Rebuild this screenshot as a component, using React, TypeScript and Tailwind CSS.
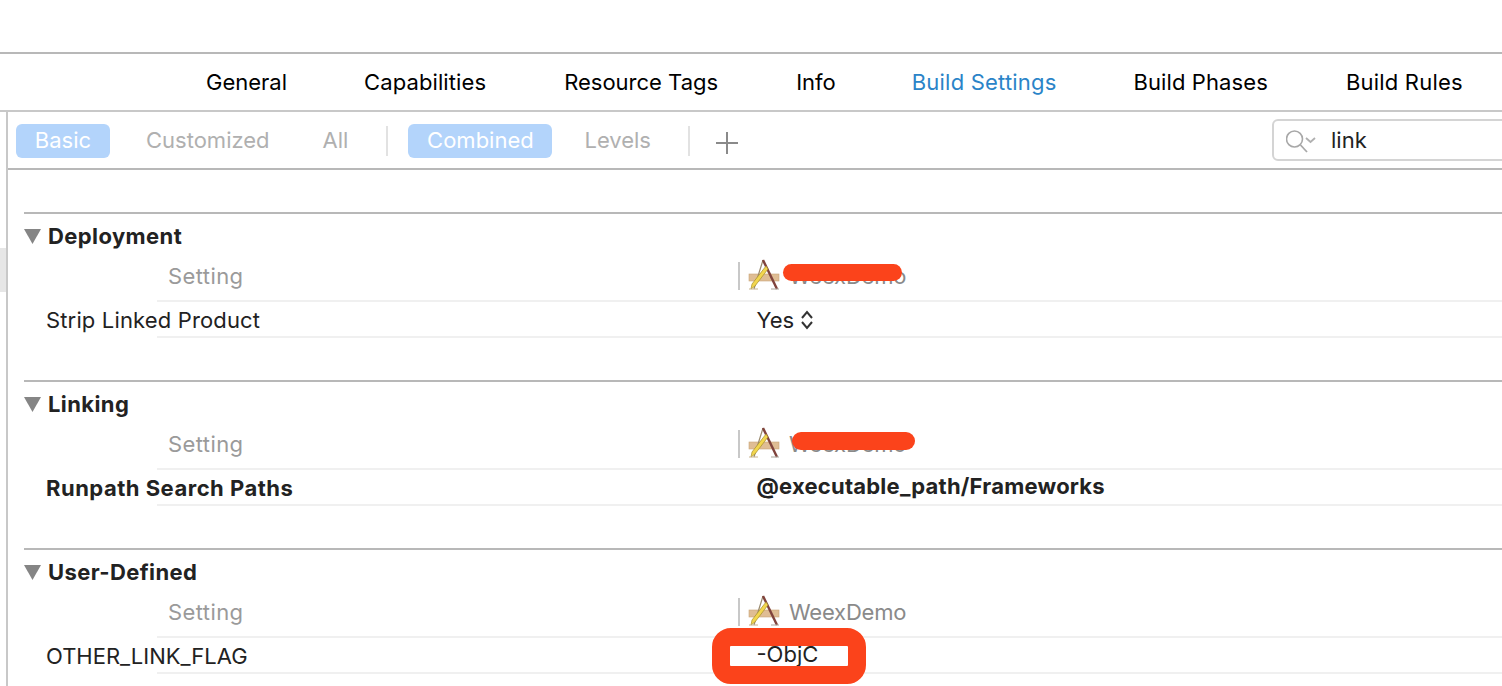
const XcodeIcon = () => (
  <svg width="34" height="32" viewBox="0 0 34 32" className="shrink-0">
    <rect x="1" y="15" width="30" height="7" fill="#dfbd94" stroke="#c9a678" strokeWidth="0.6" />
    <path d="M15 1 L6 30" stroke="#9a8a6e" strokeWidth="1.2" fill="none" />
    <path d="M15 1 L29 30" stroke="#80433c" strokeWidth="2.4" fill="none" />
    <path d="M18 7 L20 10 L7 27 L3 30 L4 25 Z" fill="#f2d64e" stroke="#a88f2c" strokeWidth="0.7" />
    <path d="M1 30 H10" stroke="#c9b48f" strokeWidth="1" />
    <path d="M23 30 H31" stroke="#a9a39a" strokeWidth="1" />
  </svg>
);

const Chevrons = () => (
  <svg width="14" height="20" viewBox="0 0 14 20" className="ml-[6px]">
    <path d="M2 8 L7 2 L12 8 M2 12 L7 18 L12 12" fill="none" stroke="#333" strokeWidth="2" />
  </svg>
);

function Section({ title, project, label, value, bold, chevron, labelTrack, valueClass, children }: {
  title: string; project: string; label: string; value: string; bold?: boolean; chevron?: boolean; labelTrack?: string; valueClass?: string; children?: React.ReactNode;
}) {
  const tone = bold ? "font-bold text-[#222]" : "text-[#222]";
  return (
    <section className="relative ml-[16px] border-t-2 border-[#b8b8b8] mb-[42px]">
      <div className="h-[44px] flex items-center">
        <svg width="17" height="15" viewBox="0 0 17 15" className="shrink-0">
          <path d="M0 0 H17 L8.5 15 Z" fill="#858585" />
        </svg>
        <span className="ml-[7px] text-[22px] font-bold text-[#222] tracking-[0.4px]">{title}</span>
      </div>
      <div className="flex h-[44px] pb-[6px] items-center border-b-2 border-[#f0f0f0] ml-[133px]">
        <span className="text-[22px] text-[#9a9a9a] ml-[11px] w-[570px] tracking-[0.4px]">Setting</span>
        <span className="w-[2px] h-[28px] bg-[#c8c8c8]" />
        <span className="ml-[8px] -mt-[3px] flex"><XcodeIcon /></span>
        <span className="ml-[7px] text-[22px] text-[#8a8a8a] tracking-[-0.2px]">{project}</span>
      </div>
      <div className="flex h-[36px] pt-[2px] items-center border-b-2 border-[#f0f0f0] ml-[133px]">
        <span className={"-ml-[111px] w-[710.5px] shrink-0 text-[22px] " + tone + " " + (labelTrack ?? "")}>{label}</span>
        <span className={"text-[22px] " + tone + " " + (valueClass ?? "")}>{value}</span>
        {chevron && <Chevrons />}
      </div>
      {children}
    </section>
  );
}

const tabs = [
  { t: "General", c: "text-black" },
  { t: "Capabilities", c: "text-black tracking-[0.1px] -ml-[1px]" },
  { t: "Resource Tags", c: "text-black" },
  { t: "Info", c: "text-black" },
  { t: "Build Settings", c: "text-[#2a84c8] tracking-[0.2px] -ml-[2px]" },
  { t: "Build Phases", c: "text-black tracking-[0.1px] -ml-[1px]" },
  { t: "Build Rules", c: "text-black tracking-[0.2px]" },
];

export default function App() {
  return (
    <div className="relative h-[686px] w-[1502px] overflow-hidden bg-white font-['Inter','Liberation_Sans',sans-serif]">
      <div className="h-[52px]" />
      <nav className="h-[60px] border-t-2 border-b-2 border-t-[#b8b8b8] border-b-[#c8c8c8] flex items-center gap-[78px] pl-[206px]">
        {tabs.map(({ t, c }) => (
          <span key={t} className={"text-[22px] whitespace-nowrap " + c}>{t}</span>
        ))}
      </nav>
      <div className="ml-[6px] border-l-2 border-[#c8c8c8] h-[574px]">
        <div className="h-[58px] border-b-2 border-[#b8b8b8] flex items-center pl-[8px] pt-[1px] relative">
          <span className="h-[34px] w-[94px] rounded-[6px] bg-[#b3d4fb] text-white text-[22px] flex items-center justify-center">Basic</span>
          <span className="ml-[36px] text-[22px] text-[#b0b0b0]">Customized</span>
          <span className="ml-[53px] text-[22px] text-[#b0b0b0]">All</span>
          <span className="ml-[38px] w-[2px] h-[30px] bg-[#e2e2e2]" />
          <span className="ml-[20px] h-[34px] w-[144px] rounded-[6px] bg-[#b3d4fb] text-white text-[22px] flex items-center justify-center">Combined</span>
          <span className="ml-[32px] text-[22px] text-[#b0b0b0]">Levels</span>
          <span className="ml-[37px] w-[2px] h-[30px] bg-[#e2e2e2]" />
          <svg width="24" height="24" viewBox="0 0 24 24" className="ml-[25px] mt-[4px]">
            <path d="M12 1 V23 M1 12 H23" stroke="#8a8a8a" strokeWidth="2" />
          </svg>
          <div className="absolute left-[1264px] top-[7px] w-[260px] h-[42px] rounded-[6px] border-2 border-[#d4d4d4] flex items-center pl-[12px]">
            <svg width="32" height="26" viewBox="0 0 32 26" className="shrink-0">
              <circle cx="8.5" cy="12" r="8" fill="none" stroke="#a8a8a8" strokeWidth="1.6" />
              <path d="M14.5 18 L21 25" stroke="#a8a8a8" strokeWidth="1.8" />
              <path d="M20 11 L24.5 15 L29 11" fill="none" stroke="#b0b0b0" strokeWidth="1.8" />
            </svg>
            <span className="ml-[13px] text-[22px] text-[#222]">link</span>
          </div>
        </div>
        <div className="pt-[42px] relative">
          <Section title="Deployment" project="WeexDemo" label="Strip Linked Product" value="Yes" chevron labelTrack="tracking-[0.15px]">
            <span className="absolute left-[759px] top-[50px] h-[17px] w-[119px] rounded-full bg-[#fb431b]" />
          </Section>
          <Section title="Linking" project="WeexDemo" label="Runpath Search Paths" value="@executable_path/Frameworks" bold labelTrack="tracking-[0.5px]" valueClass="tracking-[0.22px] -mt-[4px]">
            <span className="absolute left-[768px] top-[50px] h-[18px] w-[123px] rounded-full bg-[#fb431b]" />
          </Section>
          <Section title="User-Defined" project="WeexDemo" label="OTHER_LINK_FLAG" value="-ObjC" valueClass="-mt-[4px]">
            <span className="absolute left-[688px] top-[78px] h-[56px] w-[154px] rounded-[19px] border-[18px] border-[#fb431b]" />
          </Section>
        </div>
      </div>
      <div className="absolute left-0 top-[248px] w-[6px] h-[44px] bg-[#e6e6e6]" />
    </div>
  );
}
